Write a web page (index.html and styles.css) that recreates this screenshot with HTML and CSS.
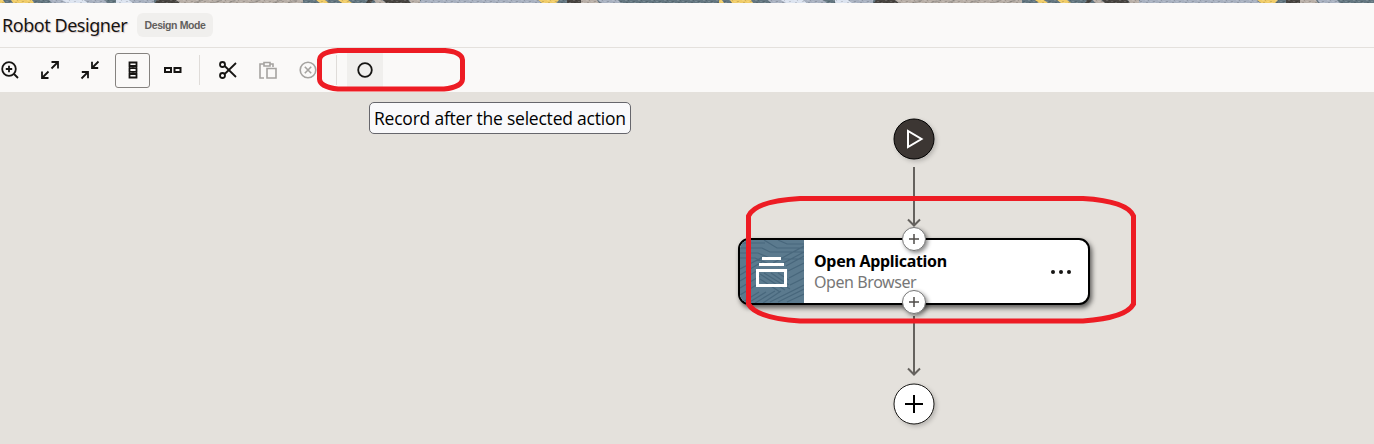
FILE: index.html
```html
<!DOCTYPE html>
<html lang="en">
<head>
<meta charset="utf-8">
<title>Robot Designer</title>
<link rel="stylesheet" href="styles.css">
</head>
<body>
<svg class="strip" width="1374" height="3" viewBox="0 0 1374 3">
  <defs>
    <pattern id="speckle" width="13" height="3" patternUnits="userSpaceOnUse">
      <path d="M1 0h2v1h-2zM6 1h2v1H6zM10 2h2v1h-2z" fill="#fff" opacity=".13"/>
      <path d="M4 0h1v1H4zM9 1h2v1H9zM2 2h2v1H2z" fill="#000" opacity=".13"/>
    </pattern>
    <g id="band">
      <rect width="719" height="3" fill="#637680"/>
      <path d="M0 0h3l2 3H0zM11 0h21l2 3H13zM316 0h9l4 3h-9zM338 0h10l4 3h-10zM538 0h21l-3 3h-14z" fill="#f0cc68"/>
      <path d="M49 0h15l4 3H52zM84 0h20l4 3H88zM129 0h25v3h-22zM421 0h117l3 3H419zM598 0h20l3 3h-20z" fill="#a8b1c0"/>
      <path d="M62 0h22l4 3H67zM116 0h13l4 3h-17z" fill="#dce4f0"/>
      <path d="M157 0h19l4 3h-25zM368 0h5l-2 3h-5zM383 0h25l3 3h-25zM567 0h14v3h-14z" fill="#484541"/>
      <path d="M176 0h127v3H180zM374 0h8l4 3h-10zM409 0h11v3h-9zM581 0h16l2 3h-18z" fill="#b8afa7"/>
      <path d="M194 3l9-3M212 3l10-3M229 3l7-3M251 3l9-3M273 3l9-3M288 3l9-3" stroke="#a09a94" stroke-width="1.500"/>
    </g>
  </defs>
  <use href="#band"/>
  <use href="#band" x="719"/>
  <rect width="1374" height="3" fill="url(#speckle)"/>
</svg>
<header class="header">
  <h1 class="title">Robot Designer</h1>
  <span class="mode">Design Mode</span>
</header>
<nav class="toolbar">
  <span class="tool"><svg viewBox="0 0 20 20"><circle cx="9" cy="9" r="6.800"/><path d="M14 14l4 4M9 5.800v6.400M5.800 9h6.400"/></svg></span>
  <span class="tool"><svg viewBox="0 0 20 20"><path d="M11.500 8.500l6-6M11.500 2H18v6.500M8.500 11.500l-6 6M2 11.500V18h6.500"/></svg></span>
  <span class="tool"><svg viewBox="0 0 20 20"><path d="M12 8l6.500-6.500M12 1.800V8h6.200M8 12l-6.500 6.500M1.800 12H8v6.200"/></svg></span>
  <span class="tool selected"><svg viewBox="0 0 20 20"><path d="M6.500 2.500h7v3.500h-7zM6.500 8.200h7v3.600h-7zM6.500 14h7v3.500h-7z"/><path class="links" d="M6.500 6v2.200M13.500 6v2.200M6.500 11.800V14M13.500 11.800V14M10 6v2.200M10 11.800V14"/></svg></span>
  <span class="tool"><svg class="bold" viewBox="0 0 20 20"><path d="M2 8h6v4H2zM11.500 8h6v4h-6z"/></svg></span>
  <i class="rule"></i>
  <span class="tool cut"><svg viewBox="0 0 20 20"><circle cx="4.500" cy="4.500" r="2.500"/><circle cx="4.500" cy="15.500" r="2.500"/><path d="M6.700 6L18 17M6.700 14L18 3"/></svg></span>
  <span class="tool muted"><svg viewBox="0 0 20 20"><path d="M6 18H2V4h4M12 4h3v3M6 2.500h6v3.500H6zM9 8.500h9V18H9z"/></svg></span>
  <span class="tool muted"><svg viewBox="0 0 20 20"><circle cx="10" cy="10" r="7.800"/><path d="M6.800 6.800l6.400 6.400M13.200 6.800l-6.400 6.400"/></svg></span>
  <i class="rule second"></i>
  <span class="tool record"><svg viewBox="0 0 20 20"><circle cx="10" cy="10" r="6.800"/></svg></span>
</nav>
<main class="canvas">
  <div class="tooltip">Record after the selected action</div>
  <svg class="flow" width="60" height="352" viewBox="884 92 60 352">
    <path class="edge" d="M914 167v58M914 316v58"/>
    <path class="arrow" d="M908 219.500l6 6 6-6M908 368.500l6 6 6-6"/>
    <circle class="start" cx="914" cy="139" r="20"/>
    <path class="play" d="M908 131v16l13.500-8z"/>
    <circle class="end" cx="914" cy="404" r="20"/>
    <path class="plus-large" d="M905 404h18M914 395v18"/>
  </svg>
  <article class="card">
    <div class="thumb">
      <svg width="64" height="63" viewBox="0 0 64 63">
        <g class="grain">
          <path d="M0 3h25M0 8h22l8 4h34M0 13h18l14 6h32M0 18h15l14 6M24 0l13 8h27M38 0l9 4h17M0 29L23 17M0 35l22-13M0 41l20-12M0 48l20-12M0 55l18-11M3 62l16-10M33 23l31-17M38 26l26-14M46 26l18-10M48 31l16-8M49 38l15-8M50 45l14-7M30 62l34-17M38 62l26-13M47 62l17-8M8 63l18-11M15 63l20-12M23 63l18-12"/>
          <path d="M20 34l25 16M20 39l20 13M24 33l26 16M31 33l18 12M38 33l11 7"/>
        </g>
        <path class="glyph" d="M22 18.500h19M19 24.500h25M17.500 30.500h28v15h-28z"/>
      </svg>
    </div>
    <div class="info">
      <div class="name">Open Application</div>
      <div class="detail">Open Browser</div>
    </div>
    <svg class="more" width="20" height="6" viewBox="0 0 20 6"><circle cx="2" cy="3" r="2"/><circle cx="10" cy="3" r="2"/><circle cx="18" cy="3" r="2"/></svg>
  </article>
  <svg class="handle top" width="30" height="30" viewBox="0 0 30 30"><circle cx="15" cy="15" r="11.500"/><path d="M10 15h10M15 10v10"/></svg>
  <svg class="handle bottom" width="30" height="30" viewBox="0 0 30 30"><circle cx="15" cy="15" r="11.500"/><path d="M10 15h10M15 10v10"/></svg>
</main>
<svg class="marks" width="1374" height="444" viewBox="0 0 1374 444">
  <path d="M338 50.500H445Q462 52 462.500 60V79Q462 87 444 89H338Q320 87 319.500 79V60Q320 52 338 50.500z"/>
  <path d="M800 198.500H1083Q1127 201 1133.500 216V304Q1126 318 1083 321H800Q756 318 748.500 304V216Q755 201 800 198.500z"/>
</svg>
</body>
</html>
```
FILE: styles.css
```css
body {
  margin: 0;
  width: 1374px;
  height: 444px;
  overflow: hidden;
  display: flex;
  flex-direction: column;
  background: #faf9f8;
  font-family: "Open Sans", "Noto Sans", sans-serif;
  color: #161513;
}
svg { display: block; fill: none; }
.strip { flex: none; }
.header {
  box-sizing: border-box;
  height: 45px;
  display: flex;
  align-items: center;
  gap: 10px;
  padding-left: 2px;
  border-bottom: 1px solid #e4e1dd;
}
.title {
  margin: 0;
  width: 125px;
  font: 400 18px/24px "Noto Sans", sans-serif;
  letter-spacing: -0.46px;
  white-space: nowrap;
  text-shadow: 1px 1px 1px #d8c8c8;
}
.mode {
  box-sizing: border-box;
  width: 76px;
  height: 24px;
  border-radius: 6px;
  background: #f0efed;
  color: #62605d;
  font: 700 10.5px/25px "Liberation Sans", sans-serif;
  letter-spacing: -0.4px;
  text-align: center;
}
.toolbar {
  height: 44px;
  display: flex;
  align-items: center;
  gap: 5px;
  margin-left: -8px;
}
.tool {
  box-sizing: border-box;
  width: 35px;
  height: 35px;
  flex: none;
  display: grid;
  place-items: center;
}
.tool svg { width: 20px; height: 20px; stroke: #161513; stroke-width: 1.8; }
.tool .bold { stroke-width: 2; }
.tool .links { stroke-width: 1; }
.tool.selected { margin-left: 3px; border: 1px solid #85827f; border-radius: 3px; }
.tool.muted svg { stroke: #a5a3a0; stroke-width: 1.6; }
.tool.cut { margin-left: 5px; }
.rule { width: 1px; height: 30px; margin-left: 4px; background: #dfdcd9; }
.rule.second { margin-left: 6px; }
.tool.record { width: 36px; margin-left: 5px; background: #f0efed; }
.canvas {
  flex: 1;
  position: relative;
  background: #e4e1dc;
}
.tooltip {
  position: absolute;
  left: 369px;
  top: 10px;
  box-sizing: border-box;
  width: 262px;
  height: 32px;
  border: 1px solid #66666c;
  border-radius: 5px;
  background: #f9f9fb;
  padding-left: 4px;
  font: 400 17.5px/31px "Open Sans", sans-serif;
  letter-spacing: -0.22px;
  white-space: nowrap;
  color: #000;
}
.flow { position: absolute; left: 884px; top: 0; }
.edge { stroke: #65625e; stroke-width: 2; }
.arrow { stroke: #65625e; stroke-width: 2; }
.start { fill: #3c3633; stroke: #000; filter: drop-shadow(2px 2px 2px #0003); }
.play { stroke: #fff; stroke-width: 2; }
.end { fill: #fff; stroke: #161513; filter: drop-shadow(2px 2px 2px #0003); }
.plus-large { stroke: #000; stroke-width: 2; }
.card {
  position: absolute;
  left: 738px;
  top: 146px;
  box-sizing: border-box;
  width: 352px;
  height: 67px;
  display: flex;
  align-items: center;
  border: 2px solid #000;
  border-radius: 11px;
  background: #fff;
  box-shadow: 2px 3px 5px #0009;
}
.thumb {
  width: 64px;
  height: 63px;
  flex: none;
  overflow: hidden;
  border-radius: 9px 0 0 9px;
  background: #5b7a8e;
}
.grain { stroke: #48677c; stroke-width: 1.2; }
.glyph { stroke: #fff; stroke-width: 3; }
.info { flex: 1; padding-left: 10px; white-space: nowrap; font: 16px/21px "Noto Sans", sans-serif; }
.name { font-weight: 700; color: #000; letter-spacing: -0.3px; }
.detail { color: #777; letter-spacing: -0.42px; }
.more { margin-right: 17px; fill: #161513; }
.handle {
  position: absolute;
  left: 899px;
  stroke: #4f4c49;
  stroke-width: 1.5;
  filter: drop-shadow(2px 2px 2px #0007);
}
.handle circle { fill: #fff; stroke: #777; stroke-width: 1; }
.handle.top { top: 132px; }
.handle.bottom { top: 195px; }
.marks {
  position: absolute;
  left: 0;
  top: 0;
  stroke: #ed1c24;
  stroke-width: 5;
}
```
